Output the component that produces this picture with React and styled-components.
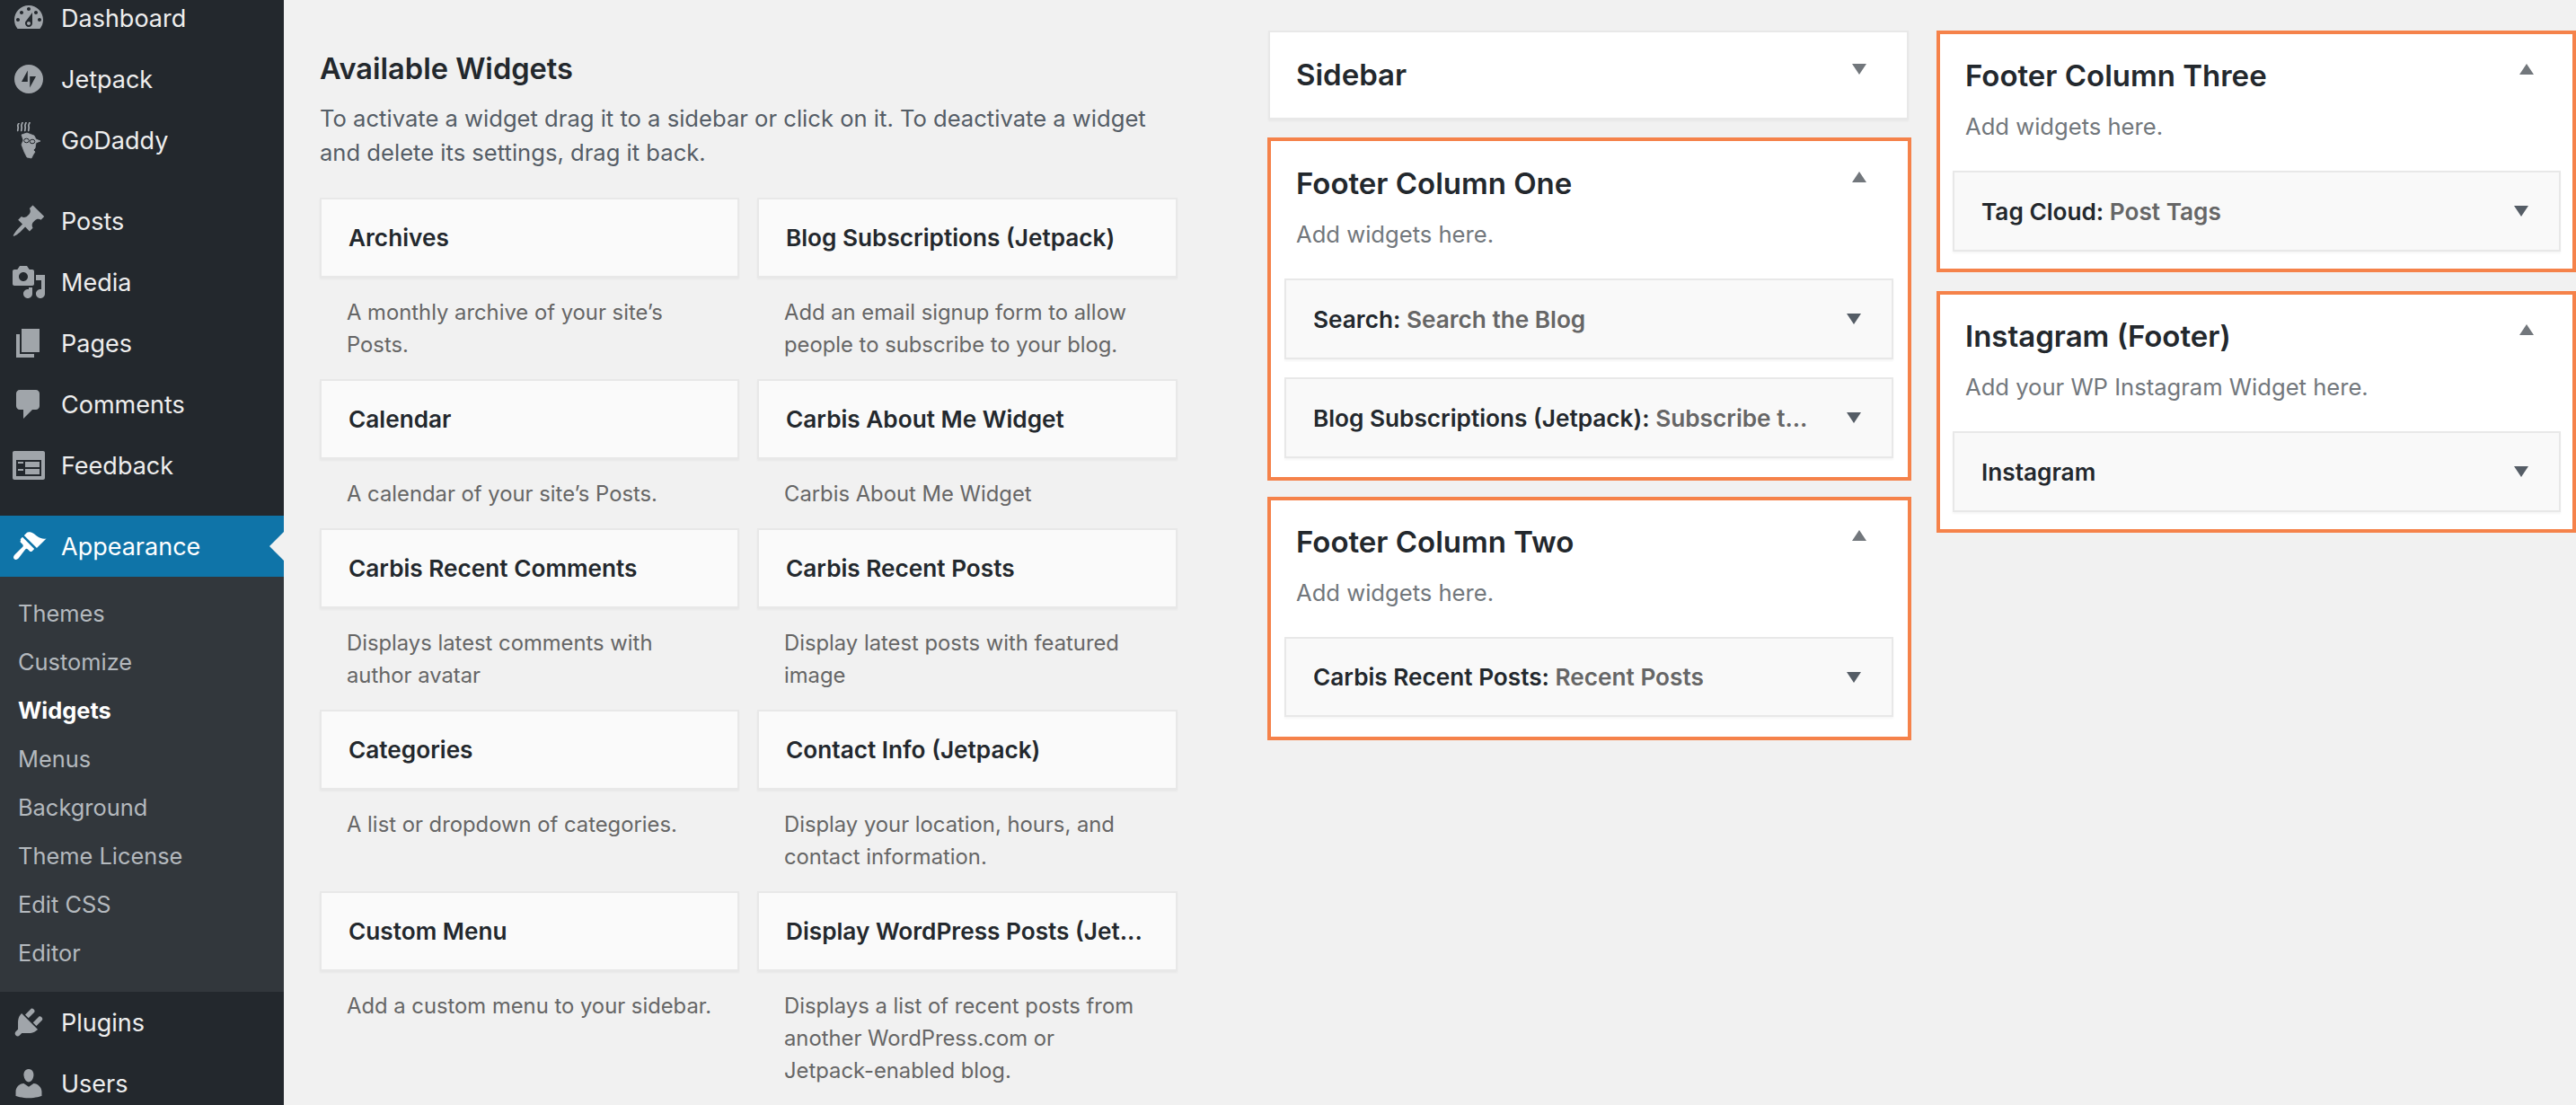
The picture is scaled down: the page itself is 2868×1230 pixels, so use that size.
import React from 'react';
import styled, { createGlobalStyle } from 'styled-components';

const GlobalStyle = createGlobalStyle`
  html, body {
    margin: 0;
    padding: 0;
    background: #f1f1f1;
    overflow: hidden;
  }
  body {
    font-family: Inter, "Noto Sans", "Liberation Sans", sans-serif;
    -webkit-font-smoothing: antialiased;
  }
`;

const Shell = styled.div`
  display: flex;
  width: 2868px;
  height: 1230px;
  overflow: hidden;
  background: #f1f1f1;
`;

const Sidebar = styled.nav`
  flex: none;
  width: 316px;
  background: #23282d;
`;

const Menu = styled.div`
  margin-top: -14px;
`;

const MenuItem = styled.div`
  position: relative;
  display: flex;
  align-items: center;
  gap: 16px;
  height: 68px;
  padding-left: 12px;
  font-size: 27px;
  color: ${(p) => (p.$current ? '#fff' : '#eee')};
  background: ${(p) => (p.$current ? '#0f74a8' : 'transparent')};

  svg {
    flex: none;
    width: 40px;
    height: 40px;
    overflow: visible;
    fill: ${(p) => (p.$current ? '#fff' : '#a0a5aa')};
  }
`;

const Notch = styled.span`
  position: absolute;
  right: 0;
  top: 18px;
  width: 0;
  height: 0;
  border-top: 16px solid transparent;
  border-bottom: 16px solid transparent;
  border-right: 16px solid #f1f1f1;
`;

const MenuGap = styled.div`
  height: 22px;
`;

const Submenu = styled.div`
  padding: 13px 0 17px;
  background: #32373c;
`;

const SubItem = styled.div`
  display: flex;
  align-items: center;
  height: 54px;
  padding-left: 20px;
  font-size: 25.4px;
  font-weight: ${(p) => (p.$current ? 700 : 400)};
  color: ${(p) => (p.$current ? '#fff' : '#b4b9be')};
`;

const Content = styled.main`
  display: flex;
  align-items: flex-start;
  flex: 1;
`;

const Available = styled.section`
  flex: none;
  width: 955px;
  margin-left: 40px;
  padding-top: 56px;
`;

const Heading = styled.h2`
  margin: 0 0 17px;
  font-size: 32.6px;
  line-height: 40px;
  font-weight: 600;
  color: #23282d;
`;

const Intro = styled.p`
  margin: 0 0 31px;
  font-size: 25.6px;
  line-height: 38px;
  color: #555d66;
`;

const WidgetGrid = styled.div`
  display: grid;
  grid-template-columns: 467px 468px;
  column-gap: 20px;
`;

const WidgetEntry = styled.div`
  padding-bottom: 20px;
`;

const WidgetCard = styled.div`
  box-sizing: border-box;
  display: flex;
  align-items: center;
  height: 89px;
  padding-left: 30px;
  background: #fafafa;
  border: 2px solid #e8e8e8;
  box-shadow: 0 2px 2px rgba(0, 0, 0, 0.04);
  font-size: 26.2px;
  font-weight: 600;
  color: #23282d;
  white-space: nowrap;
`;

const WidgetDesc = styled.p`
  margin: 21px 0 0;
  padding: 0 27px 0 30px;
  font-size: 23.8px;
  line-height: 36px;
  color: #666;
`;

const NoBreak = styled.span`
  white-space: nowrap;
`;

const AreaColumn = styled.div`
  flex: none;
  display: flex;
  flex-direction: column;
  gap: ${(p) => p.$gap}px;
  width: ${(p) => p.$width}px;
  margin-left: ${(p) => p.$left}px;
  padding-top: 34px;
`;

const Area = styled.div`
  box-sizing: border-box;
  margin: ${(p) => (p.$marked ? `${p.$pull || 0}px 0 0` : '0 3px 0 1px')};
  padding: ${(p) => p.$top}px 0 ${(p) => p.$bottom}px;
  background: #fff;
  border: ${(p) => (p.$marked ? '4px solid #f5824a' : '2px solid #e8e8e8')};
  box-shadow: ${(p) => (p.$marked ? 'none' : '0 2px 2px rgba(0, 0, 0, 0.04)')};
`;

const AreaHead = styled.div`
  display: flex;
  justify-content: space-between;
  align-items: flex-start;
  padding: 0 ${(p) => p.$right}px 0 ${(p) => (p.$marked ? '28px' : '29px')};
`;

const AreaTitle = styled.h3`
  margin: 0;
  font-size: 33px;
  line-height: 38px;
  font-weight: 600;
  color: #23282d;
`;

const Caret = styled.span`
  flex: none;
  width: 0;
  height: 0;
  margin-top: ${(p) => p.$top || 0}px;
  border-left: 8px solid transparent;
  border-right: 8px solid transparent;
  border-top: ${(p) => (p.$up ? 'none' : `12px solid ${p.$color}`)};
  border-bottom: ${(p) => (p.$up ? `12px solid ${p.$color}` : 'none')};
`;

const AreaDesc = styled.p`
  margin: 20px 0 31px;
  padding-left: 28px;
  font-size: 25.6px;
  line-height: 36px;
  color: #72777c;
`;

const AreaWidgets = styled.div`
  display: flex;
  flex-direction: column;
  gap: 20px;
  padding: ${(p) => (p.$edge ? '0 13px 0 14px' : '0 16px 0 15px')};
`;

const AreaWidget = styled.div`
  box-sizing: border-box;
  display: flex;
  justify-content: space-between;
  align-items: center;
  height: ${(p) => p.$height}px;
  padding: 0 34px 0 30px;
  background: #f9f9f9;
  border: 2px solid #e8e8e8;
  box-shadow: 0 2px 2px rgba(0, 0, 0, 0.04);
  font-size: 26.2px;
  font-weight: 600;
  color: #23282d;
  white-space: nowrap;
`;

const AreaWidgetName = styled.span`
  color: #666;
`;

const DashIcon = ({ d, evenOdd }) => (
  <svg viewBox="0 0 20 20" fillRule={evenOdd ? 'evenodd' : 'nonzero'}>
    <path d={d} />
  </svg>
);

const GoDaddyIcon = () => (
  <svg viewBox="2 11 40 40">
    <path
      d="M14 25l6-2 8 3 2 4 5 2-5 2-1 6-2 2 2 2-2 3-2 4-5-1-3-6-3-8 2-5z"
      stroke="#a0a5aa"
      strokeWidth="0.8"
      strokeLinejoin="round"
    />
    <ellipse cx="19.5" cy="31.5" rx="2.8" ry="2.3" fill="none" stroke="#23282d" strokeWidth="1" />
    <ellipse cx="26" cy="32.5" rx="2.8" ry="2.3" fill="none" stroke="#23282d" strokeWidth="1" />
    <g fill="none" stroke="#a0a5aa" strokeWidth="1.8">
      <path d="M10 21c-1-2 1-3 0-5s1-3 1-4" />
      <path d="M14 21c-1-2 1-3 0-5s1-3 1-5" />
      <path d="M18 21c-1-2 1-3 0-5s1-3 1-5" />
      <path d="M22 21c-1-2 1-3 0-5s1-3 1-5" />
    </g>
  </svg>
);

const icons = {
  dashboard: 'M3.76 16h12.48c1.1-1.37 1.76-3.11 1.76-5 0-4.42-3.58-8-8-8s-8 3.58-8 8c0 1.89.66 3.63 1.76 5zM10 4c.55 0 1 .45 1 1s-.45 1-1 1-1-.45-1-1 .45-1 1-1zM6 6c.55 0 1 .45 1 1s-.45 1-1 1-1-.45-1-1 .45-1 1-1zm8 0c.55 0 1 .45 1 1s-.45 1-1 1-1-.45-1-1 .45-1 1-1zm-5.37 5.55L12 7v6c0 1.1-.9 2-2 2s-2-.9-2-2c0-.57.24-1.08.63-1.45zM4 10c.55 0 1 .45 1 1s-.45 1-1 1-1-.45-1-1 .45-1 1-1zm12 0c.55 0 1 .45 1 1s-.45 1-1 1-1-.45-1-1 .45-1 1-1zm-5 3c0-.55-.45-1-1-1s-1 .45-1 1 .45 1 1 1 1-.45 1-1z',
  jetpack: 'M10 2a8 8 0 1 0 0 16a8 8 0 0 0 0-16zM9.4 5.2v6.3H6zM10.6 14.8V8.5H14z',
  pin: 'M10.44 3.02l1.82-1.82 6.36 6.35-1.83 1.82c-1.05-.68-2.48-.57-3.41.36l-.75.75c-.92.93-1.04 2.35-.35 3.41l-1.83 1.82-2.41-2.41-2.8 2.79c-.42.42-3.38 2.71-3.8 2.29s1.86-3.39 2.28-3.81l2.79-2.79L4.1 9.36l1.83-1.82c1.05.69 2.48.57 3.4-.36l.75-.75c.93-.92 1.05-2.35.36-3.41z',
  media: 'M13 11V4c0-.55-.45-1-1-1h-1.67L9 1H5L3.67 3H2c-.55 0-1 .45-1 1v7c0 .55.45 1 1 1h10c.55 0 1-.45 1-1zM7 4.5c1.38 0 2.5 1.12 2.5 2.5S8.38 9.5 7 9.5 4.5 8.38 4.5 7 5.62 4.5 7 4.5zM14 6h5v10.5c0 1.38-1.12 2.5-2.5 2.5S14 17.88 14 16.5s1.12-2.5 2.5-2.5c.17 0 .34.02.5.05V9h-3V6zm-4 8.05V13h2v3.5c0 1.38-1.12 2.5-2.5 2.5S7 17.88 7 16.5 8.12 14 9.5 14c.17 0 .34.02.5.05z',
  pages: 'M6 15V2h10v13H6zm-1 1h8v2H3V5h2v11z',
  comments: 'M5 2h9c1.1 0 2 .9 2 2v7c0 1.1-.9 2-2 2h-2l-5 5v-5H5c-1.1 0-2-.9-2-2V4c0-1.1.9-2 2-2z',
  feedback: 'M2 2h16c.55 0 1 .45 1 1v14c0 .55-.45 1-1 1H2c-.55 0-1-.45-1-1V3c0-.55.45-1 1-1zm15 14V7H3v9h14zM4 8v1h3V8H4zm4 0v3h8V8H8zm-4 4v1h3v-1H4zm4 0v3h8v-3H8z',
  appearance: 'M14.48 11.06L7.41 3.99l1.5-1.5c.5-.56 2.3-.47 3.51.32 1.21.8 1.43 1.28 2.91 2.1 1.18.64 2.45 1.26 4.45.85zM5.3 6.1l1.2-1.2 6.6 6.6-1.2 1.2c-.4.4-1 .4-1.4 0l-1-1c-.4-.4-1-.4-1.4 0L4.3 16.8c-.8.8-1.8.9-2.4.3s-.5-1.6.3-2.4l4.4-4.3c.4-.4.4-1 0-1.4l-1-1c-.4-.4-.4-1 0-1.4z',
  plugins: 'M13.11 4.36L9.87 7.6 8 5.73l3.24-3.24c.35-.34 1.05-.2 1.56.32.52.51.66 1.21.31 1.55zm-8 1.77l.91-1.12 9.01 9.01-1.19.84c-.71.71-2.63 1.16-3.82 1.16H6.14L4.9 17.26c-.59.59-1.54.59-2.12 0-.59-.58-.59-1.53 0-2.12l1.24-1.24v-3.88c0-1.13.4-3.19 1.09-3.89zm7.26 3.97l3.24-3.24c.34-.35 1.04-.21 1.55.31.52.51.66 1.21.31 1.55l-3.24 3.25z',
  users: 'M10 9.25c-2.27 0-2.73-3.44-2.73-3.44C7 4.02 7.82 2 9.97 2c2.16 0 2.98 2.02 2.71 3.81 0 0-.41 3.44-2.68 3.44zm0 2.57L12.72 10c2.39 0 4.52 2.33 4.52 4.53v2.49s-3.65 1.13-7.24 1.13c-3.65 0-7.24-1.13-7.24-1.13v-2.49c0-2.25 1.94-4.48 4.47-4.48z',
};

const submenu = ['Themes', 'Customize', 'Widgets', 'Menus', 'Background', 'Theme License', 'Edit CSS', 'Editor'];

const widgets = [
  ['Archives', 'A monthly archive of your site’s Posts.'],
  ['Blog Subscriptions (Jetpack)', 'Add an email signup form to allow people to subscribe to your blog.'],
  ['Calendar', 'A calendar of your site’s Posts.'],
  ['Carbis About Me Widget', 'Carbis About Me Widget'],
  ['Carbis Recent Comments', 'Displays latest comments with author avatar'],
  ['Carbis Recent Posts', 'Display latest posts with featured image'],
  ['Categories', 'A list or dropdown of categories.'],
  ['Contact Info (Jetpack)', 'Display your location, hours, and contact information.'],
  ['Custom Menu', 'Add a custom menu to your sidebar.'],
  ['Display WordPress Posts (Jet...', <>Displays a list of recent posts from another WordPress.com or <NoBreak>Jetpack-enabled</NoBreak> blog.</>],
];

const WidgetArea = ({ title, desc, items, top = 28, bottom = 21, pull, edge, height = 90 }) => (
  <Area $marked $top={top} $bottom={bottom} $pull={pull}>
    <AreaHead $marked $right={edge ? 43 : 46}>
      <AreaTitle>{title}</AreaTitle>
      <Caret $up $color="#72777c" $top={6} />
    </AreaHead>
    <AreaDesc>{desc}</AreaDesc>
    <AreaWidgets $edge={edge}>
      {items.map(([name, sub]) => (
        <AreaWidget key={name} $height={height}>
          <span>
            {name}
            {sub && <>: <AreaWidgetName>{sub}</AreaWidgetName></>}
          </span>
          <Caret $color="#555d66" />
        </AreaWidget>
      ))}
    </AreaWidgets>
  </Area>
);

export default function App() {
  return (
    <Shell>
      <GlobalStyle />
      <Sidebar>
        <Menu>
          <MenuItem><DashIcon d={icons.dashboard} evenOdd />Dashboard</MenuItem>
          <MenuItem><DashIcon d={icons.jetpack} evenOdd />Jetpack</MenuItem>
          <MenuItem><GoDaddyIcon />GoDaddy</MenuItem>
          <MenuGap />
          <MenuItem><DashIcon d={icons.pin} />Posts</MenuItem>
          <MenuItem><DashIcon d={icons.media} evenOdd />Media</MenuItem>
          <MenuItem><DashIcon d={icons.pages} />Pages</MenuItem>
          <MenuItem><DashIcon d={icons.comments} />Comments</MenuItem>
          <MenuItem><DashIcon d={icons.feedback} evenOdd />Feedback</MenuItem>
          <MenuGap />
          <MenuItem $current><DashIcon d={icons.appearance} />Appearance<Notch /></MenuItem>
          <Submenu>
            {submenu.map((label) => (
              <SubItem key={label} $current={label === 'Widgets'}>{label}</SubItem>
            ))}
          </Submenu>
          <MenuItem><DashIcon d={icons.plugins} />Plugins</MenuItem>
          <MenuItem><DashIcon d={icons.users} />Users</MenuItem>
        </Menu>
      </Sidebar>
      <Content>
        <Available>
          <Heading>Available Widgets</Heading>
          <Intro>
            To activate a widget drag it to a sidebar or click on it. To deactivate a widget
            <br />
            and delete its settings, drag it back.
          </Intro>
          <WidgetGrid>
            {widgets.map(([name, desc]) => (
              <WidgetEntry key={name}>
                <WidgetCard>{name}</WidgetCard>
                <WidgetDesc>{desc}</WidgetDesc>
              </WidgetEntry>
            ))}
          </WidgetGrid>
        </Available>
        <AreaColumn $left={100} $width={717} $gap={20}>
          <Area $top={28} $bottom={29}>
            <AreaHead $right={45}>
              <AreaTitle>Sidebar</AreaTitle>
              <Caret $color="#72777c" $top={7} />
            </AreaHead>
          </Area>
          <WidgetArea
            title="Footer Column One"
            desc="Add widgets here."
            items={[['Search', 'Search the Blog'], ['Blog Subscriptions (Jetpack)', 'Subscribe t...']]}
          />
          <WidgetArea
            title="Footer Column Two"
            desc="Add widgets here."
            items={[['Carbis Recent Posts', 'Recent Posts']]}
            top={27}
            bottom={22}
            pull={-2}
            height={89}
          />
        </AreaColumn>
        <AreaColumn $left={28} $width={712} $gap={21}>
          <WidgetArea
            title="Footer Column Three"
            desc="Add widgets here."
            items={[['Tag Cloud', 'Post Tags']]}
            top={27}
            bottom={19}
            edge
          />
          <WidgetArea
            title="Instagram (Footer)"
            desc="Add your WP Instagram Widget here."
            items={[['Instagram']]}
            top={27}
            bottom={19}
            edge
          />
        </AreaColumn>
      </Content>
    </Shell>
  );
}
